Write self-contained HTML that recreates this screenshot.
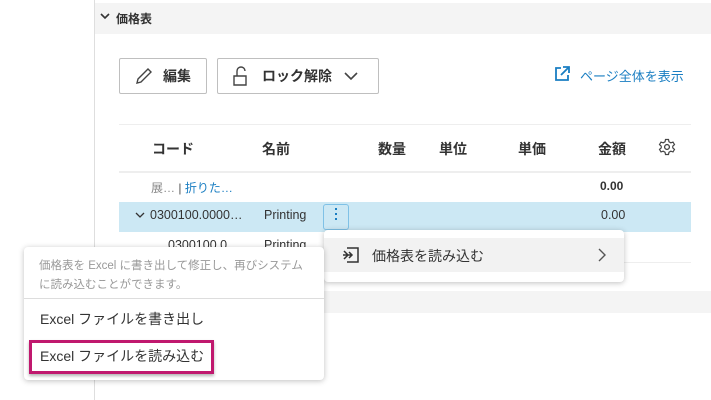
<!DOCTYPE html><html><head><meta charset="utf-8"><style>
*{box-sizing:border-box;margin:0;padding:0}
body{width:711px;height:400px;overflow:hidden;background:#fff;font-family:"Liberation Sans","Noto Sans CJK JP",sans-serif;color:#3c3c3c;position:relative;font-size:13px}
.a{position:absolute}
.btn{position:absolute;border:1px solid #bfbfbf;border-radius:2px;height:36px;top:58px;display:flex;align-items:center;font-weight:bold;font-size:14px;color:#333}
.th{position:absolute;top:139px;font-weight:bold;font-size:14px;color:#333}
.menu{position:absolute;background:#fff;border-radius:4px;box-shadow:0 1px 6px rgba(0,0,0,.25)}
</style></head><body>
<div class="a" style="left:94px;top:0;width:1px;height:400px;background:#dedede"></div>
<div class="a" style="left:95px;top:3px;width:616px;height:31px;background:#f4f4f4"></div>
<svg class="a" style="left:100px;top:13px" width="10" height="8"><path d="M1 1l4 4 4-4" stroke="#333" stroke-width="1.6" fill="none"/></svg>
<div class="a" style="left:116px;top:10px;font-size:12px;font-weight:bold;color:#333">価格表</div>
<div class="btn" style="left:119px;width:88px;padding-left:14px"><svg width="20" height="20" viewBox="0 0 20 20"><path d="M3 17l1-4L14 3l3 3L7 16z" stroke="#444" stroke-width="1.4" fill="none"/></svg><span style="margin-left:9px">編集</span></div>
<div class="btn" style="left:217px;width:162px;padding-left:14px"><svg width="18" height="22" viewBox="0 0 18 22"><path d="M2 11h12v9H2z M5 11V6a4 4 0 0 1 8 0" stroke="#444" stroke-width="1.4" fill="none"/></svg><span style="margin-left:12px">ロック解除</span><svg style="margin-left:12px" width="14" height="10"><path d="M1 2l6 6 6-6" stroke="#444" stroke-width="1.6" fill="none"/></svg></div>
<svg class="a" style="left:554px;top:66px" width="16" height="16" viewBox="0 0 16 16"><path d="M7 2H2v12h12V9 M9 1h6v6 M15 1L7 9" stroke="#1a7ec2" stroke-width="1.8" fill="none"/></svg>
<div class="a" style="left:580px;top:66px;color:#1a7ec2;font-size:13px">ページ全体を表示</div>
<div class="a" style="left:119px;top:124px;width:572px;height:1px;background:#eee"></div>
<div class="th" style="left:152px">コード</div><div class="th" style="left:262px">名前</div><div class="th" style="left:378px">数量</div><div class="th" style="left:439px">単位</div><div class="th" style="left:518px">単価</div><div class="th" style="left:598px">金額</div>
<svg class="a" style="left:658px;top:138px" width="18" height="18" viewBox="0 0 24 24"><circle cx="12" cy="12" r="3.2" stroke="#444" stroke-width="1.8" fill="none"/><path d="M10 2h4l.6 3 2.5 1.4 2.9-1 2 3.4-2.3 2v2.4l2.3 2-2 3.4-2.9-1-2.5 1.4L14 22h-4l-.6-3-2.5-1.4-2.9 1-2-3.4 2.3-2v-2.4L2 8.8l2-3.4 2.9 1L9.4 5z" stroke="#444" stroke-width="1.6" fill="none"/></svg>
<div class="a" style="left:119px;top:171px;width:572px;height:2px;background:#eee"></div>
<div class="a" style="left:151px;top:179px;font-size:12px;color:#888">展… <span style="color:#555">|</span> <span style="color:#1a7ec2">折りた…</span></div>
<div class="a" style="left:600px;top:179px;font-size:12px;font-weight:bold;color:#333">0.00</div>
<div class="a" style="left:119px;top:202px;width:572px;height:30px;background:#cce8f4"></div>
<svg class="a" style="left:135px;top:212px" width="10" height="8"><path d="M1 1l4 4 4-4" stroke="#333" stroke-width="1.3" fill="none"/></svg>
<div class="a" style="left:150px;top:208px;font-size:12.5px;color:#333">0300100.0000…</div>
<div class="a" style="left:264px;top:208px;font-size:12.5px;color:#333">Printing</div>
<div class="a" style="left:323px;top:204px;width:26px;height:26px;border:1.5px solid #7fc1e6;border-radius:3px"></div>
<div class="a" style="left:335px;top:208px;width:2px;height:2px;background:#1a7ec2;box-shadow:0 5px 0 #1a7ec2,0 10px 0 #1a7ec2"></div>
<div class="a" style="left:601px;top:208px;font-size:12.5px;color:#333">0.00</div>
<div class="a" style="left:168px;top:238px;font-size:12.5px;color:#333">0300100.0</div>
<div class="a" style="left:264px;top:238px;font-size:12.5px;color:#333">Printing</div>
<div class="a" style="left:119px;top:262px;width:572px;height:1px;background:#eee"></div>
<div class="a" style="left:95px;top:291px;width:616px;height:22px;background:#f4f4f4"></div>
<div class="menu" style="left:324px;top:230px;width:300px;height:52px"><div class="a" style="left:0;top:8px;width:300px;height:34px;background:#f2f2f2"></div>
<svg class="a" style="left:18px;top:16px" width="18" height="18" viewBox="0 0 18 18"><path d="M5 2h11v14H5 M2 5l4 4-4 4 M1 9h9 M7 6l3 3-3 3" stroke="#333" stroke-width="1.5" fill="none"/></svg>
<div class="a" style="left:48px;top:16px;font-size:14px;color:#333">価格表を読み込む</div>
<svg class="a" style="left:274px;top:18px" width="8" height="14"><path d="M1 1l6 6-6 6" stroke="#555" stroke-width="1.4" fill="none"/></svg></div>
<div class="menu" style="left:24px;top:247px;width:300px;height:133px">
<div class="a" style="left:15px;top:10px;width:270px;font-size:11.5px;line-height:19px;color:#999">価格表を Excel に書き出して修正し、再びシステムに読み込むことができます。</div>
<div class="a" style="left:0;top:51px;width:300px;height:1px;background:#ddd"></div>
<div class="a" style="left:16px;top:62px;font-size:14px;color:#333">Excel ファイルを書き出し</div>
<div class="a" style="left:5px;top:93px;width:185px;height:34px;border:3px solid #c0186e;box-shadow:0 2px 3px rgba(0,0,0,.3)"></div>
<div class="a" style="left:16px;top:99px;font-size:14px;color:#333">Excel ファイルを読み込む</div>
</div>
</body></html>
